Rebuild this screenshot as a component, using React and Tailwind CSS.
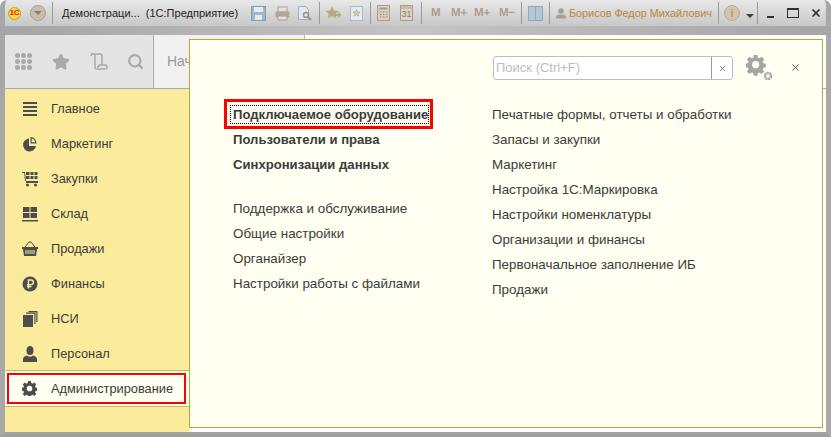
import { Star, Search, X } from "lucide-react";

const iconColor = "#4d4d4d";

// Left section icons, drawn on a 16x16 grid
function SectionIcon({ name }) {
  if (name === "main") {
    return (
      <svg width="16" height="16" viewBox="0 0 16 16" fill={iconColor}>
        <rect x="1" y="1" width="14" height="2" />
        <rect x="1" y="5" width="14" height="2" />
        <rect x="1" y="9" width="14" height="2" />
        <rect x="1" y="13" width="14" height="2" />
      </svg>
    );
  }
  if (name === "marketing") {
    return (
      <svg width="16" height="16" viewBox="0 0 16 16" fill={iconColor}>
        <path d="M7 2.500a6.500 6.500 0 1 0 7 7.500H7z" />
        <path d="M8.500 1a6 6 0 0 1 6 6.500h-6zM9.700 2.400v3.900h3.600a4.700 4.700 0 0 0-3.600-3.900z" fillRule="evenodd" />
      </svg>
    );
  }
  if (name === "purchase") {
    return (
      <svg width="16" height="16" viewBox="0 0 16 16" fill={iconColor}>
        <rect x="4" y="1" width="3.500" height="3" />
        <rect x="8.500" y="1" width="3" height="3" />
        <rect x="12.500" y="1" width="3" height="3" />
        <rect x="4" y="5" width="3.500" height="3" />
        <rect x="8.500" y="5" width="3" height="3" />
        <rect x="12.500" y="5" width="3" height="3" />
        <rect x="4" y="10" width="12" height="2" />
        <path d="M0 1h3l1 9H3L2.200 2H0z" />
        <circle cx="5.500" cy="14" r="1.500" />
        <circle cx="13.500" cy="14" r="1.500" />
      </svg>
    );
  }
  if (name === "stock") {
    return (
      <svg width="16" height="16" viewBox="0 0 16 16" fill={iconColor}>
        <rect x="1" y="1" width="6.500" height="5" />
        <rect x="8.500" y="1" width="6.500" height="5" />
        <rect x="1" y="7" width="6.500" height="5" />
        <rect x="8.500" y="7" width="6.500" height="5" />
        <rect x="0" y="14" width="16" height="1.500" />
      </svg>
    );
  }
  if (name === "sales") {
    return (
      <svg width="16" height="16" viewBox="0 0 16 16">
        <path d="M0 6h16v2h-1l-1 7H2L1 8H0z" fill={iconColor} />
        <path d="M3 6l4-5h2l4 5" fill="none" stroke={iconColor} />
        <path d="M4 9v4M6 9v4M8 9v4M10 9v4M12 9v4" stroke="#fbeb9c" />
      </svg>
    );
  }
  if (name === "finance") {
    return (
      <svg width="16" height="16" viewBox="0 0 16 16">
        <circle cx="8" cy="8" r="7.500" fill={iconColor} />
        <path d="M6.500 12.500V4h2.600a2.300 2.300 0 0 1 0 4.600H5M5 10.500h4.500" fill="none" stroke="#fbeb9c" strokeWidth="1.400" />
      </svg>
    );
  }
  if (name === "nsi") {
    return (
      <svg width="16" height="16" viewBox="0 0 16 16" fill={iconColor}>
        <rect x="1" y="4" width="10" height="12" />
        <path d="M4 1.500h9.500V13h-1.200V2.700H4z" />
        <path d="M6.500 0h9v11h-1.200V1.200H6.500z" />
      </svg>
    );
  }
  if (name === "staff") {
    return (
      <svg width="16" height="16" viewBox="0 0 16 16" fill={iconColor}>
        <ellipse cx="8" cy="4.500" rx="3.500" ry="4.500" />
        <path d="M1 16v-3c0-2 2-3 4-3.500 1.500 1.600 4.500 1.600 6 0 2 .5 4 1.500 4 3.500v3z" />
      </svg>
    );
  }
  return (
    <svg width="15" height="15" viewBox="0 0 16 16" fill={iconColor}>
      <path
        fillRule="evenodd"
        d="M6.500 0h3l.4 2.200 1.300.6 1.900-1.300 2.100 2.100-1.300 1.900.6 1.300 2 .4v3l-2 .4-.6 1.300 1.300 1.900-2.100 2.100-1.900-1.300-1.300.6-.4 2h-3l-.4-2-1.300-.6-1.900 1.300-2.100-2.100 1.300-1.900-.6-1.300-2-.4v-3l2-.4.6-1.300-1.300-1.900 2.100-2.100 1.900 1.300 1.300-.6zM8 5a3 3 0 1 0 0 6 3 3 0 0 0 0-6z"
      />
    </svg>
  );
}

const sections = [
  { id: "main", title: "Главное" },
  { id: "marketing", title: "Маркетинг" },
  { id: "purchase", title: "Закупки" },
  { id: "stock", title: "Склад" },
  { id: "sales", title: "Продажи" },
  { id: "finance", title: "Финансы" },
  { id: "nsi", title: "НСИ" },
  { id: "staff", title: "Персонал" },
];

const boldLinks = ["Пользователи и права", "Синхронизации данных"];
const serviceLinks = [
  "Поддержка и обслуживание",
  "Общие настройки",
  "Органайзер",
  "Настройки работы с файлами",
];
const rightLinks = [
  "Печатные формы, отчеты и обработки",
  "Запасы и закупки",
  "Маркетинг",
  "Настройка 1С:Маркировка",
  "Настройки номенклатуры",
  "Организации и финансы",
  "Первоначальное заполнение ИБ",
  "Продажи",
];

function Separator({ className }) {
  return <div className={`h-[22px] w-px shrink-0 bg-[#9a9a9a] ${className}`} />;
}

function MemoryKey({ label, className }) {
  return <span className={`shrink-0 text-[11.5px] font-bold text-[#a89e92] ${className}`}>{label}</span>;
}

function TitleBar() {
  return (
    <div className="flex h-[26px] shrink-0 items-center pl-2 text-[11px]">
      <div className="flex h-[13px] w-[13px] shrink-0 items-center justify-center rounded-full border border-[#c9a020] bg-[#fbd93c] text-[8px] leading-none font-bold text-[#d2201c]">
        1С
      </div>
      <div className="ml-[9px] flex h-[16px] w-[16px] shrink-0 items-center justify-center rounded-full border border-[#aaa08e] bg-[#c9bfae]">
        <div className="h-0 w-0 border-x-[4px] border-t-[4px] border-x-transparent border-t-[#8a8070]" />
      </div>
      <Separator className="ml-[6px]" />
      <span className="ml-[9px] w-[174px] shrink-0 whitespace-pre text-[#202020]">Демонстраци...  (1С:Предприятие)</span>

      <svg className="ml-[15px] shrink-0" width="15" height="15" viewBox="0 0 15 15">
        <rect x=".5" y=".5" width="14" height="14" fill="#9fb8cb" stroke="#7f9db3" />
        <rect x="3" y="1" width="9" height="5" fill="#e4ecf2" />
        <rect x="4" y="9" width="7" height="5" fill="#e4ecf2" />
      </svg>
      <svg className="ml-[9px] shrink-0" width="15" height="15" viewBox="0 0 15 15">
        <rect x="3" y="1" width="9" height="5" fill="#e6e0d8" stroke="#a89e92" />
        <rect x=".5" y="5.500" width="14" height="6" rx="1" fill="#b0a79c" />
        <rect x="3" y="10" width="9" height="4" fill="#e6e0d8" stroke="#a89e92" />
      </svg>
      <svg className="ml-[7px] shrink-0" width="15" height="15" viewBox="0 0 15 15">
        <path d="M1.500.5h7l3 3v10h-10z" fill="#e4e8ee" stroke="#9fb0c0" />
        <circle cx="9" cy="9" r="2.500" fill="none" stroke="#9a8f80" strokeWidth="1.400" />
        <path d="M11 11l3 3" stroke="#9a8f80" strokeWidth="2" />
      </svg>
      <Separator className="ml-[7px]" />
      <svg className="ml-[5px] shrink-0" width="17" height="16" viewBox="0 0 17 16">
        <path d="M7 1l2 4.500 4.500.5-3.200 3 1 4.500L7 11l-4.300 2.500 1-4.500L.5 6 5 5.500z" fill="#b5ab88" />
        <path d="M9 9h4V6.500l3.500 3.500-3.500 3.500V11H9z" fill="#9db88d" />
      </svg>
      <svg className="ml-[8px] shrink-0" width="13" height="15" viewBox="0 0 13 15">
        <rect x=".5" y=".5" width="12" height="14" fill="#e6ebf0" stroke="#a8bccb" />
        <path d="M6.500 3.500l1 2.400 2.500.2-1.900 1.600.6 2.500-2.200-1.300-2.200 1.300.6-2.500L3 6.100l2.500-.2z" fill="#d6cc9c" stroke="#a89e80" strokeWidth=".5" />
      </svg>
      <Separator className="ml-[7px]" />
      <svg className="ml-[6px] shrink-0" width="13" height="16" viewBox="0 0 13 16">
        <rect x=".5" y=".5" width="12" height="15" fill="#d8d2c2" stroke="#a89e8a" />
        <rect x="2.500" y="2.500" width="8" height="2" fill="#9aa38a" />
        <path d="M3 7h1.500M6 7h1.500M9 7h1.500M3 9.500h1.500M6 9.500h1.500M9 9.500h1.500M3 12h1.500M6 12h1.500M9 12h1.500" stroke="#8a8170" />
      </svg>
      <div className="ml-[10px] flex h-[16px] w-[13px] shrink-0 flex-col border border-[#a89e8a] bg-[#ddd6c6]">
        <div className="h-[4px] bg-[#c9bda5]" />
        <span className="text-center text-[9px] leading-[11px] text-[#8a8170]">31</span>
      </div>
      <Separator className="ml-[8px]" />
      <MemoryKey label="M" className="ml-[9px] w-[10px]" />
      <MemoryKey label="M+" className="ml-[10px] w-[16px]" />
      <MemoryKey label="M+" className="ml-[7px] w-[16px]" />
      <MemoryKey label="M−" className="ml-[9px] w-[16px]" />
      <Separator className="ml-[6px]" />
      <div className="ml-[6px] flex h-[15px] w-[15px] shrink-0 border border-[#8fa9bd] bg-[#b4c8d8]">
        <div className="w-1/2 border-r border-[#8fa9bd]" />
      </div>
      <Separator className="ml-[6px]" />
      <svg className="ml-[6px] shrink-0" width="10" height="11" viewBox="0 0 10 11" fill="#a8a091">
        <circle cx="5" cy="3" r="2.800" />
        <path d="M0 10.500V9c0-1.500 2-2.300 3-2.500h4c1 .2 3 1 3 2.500v1.500z" />
      </svg>
      <span className="ml-[3px] w-[145px] shrink-0 text-[10.8px] whitespace-nowrap text-[#b08a3a]">Борисов Федор Михайлович</span>
      <Separator className="ml-[4px]" />
      <div className="ml-[5px] flex h-[16px] w-[16px] shrink-0 items-center justify-center rounded-full border border-[#b5ab95] bg-[#cfc6ad] text-[11px] font-bold text-[#a3a06a]">
        i
      </div>
      <div className="mt-[6px] ml-[6px] h-0 w-0 shrink-0 border-x-[4px] border-t-[4px] border-x-transparent border-t-[#404040]" />
      <Separator className="ml-[3px]" />
      <div className="mt-[7px] ml-[9px] h-[2px] w-[7px] shrink-0 bg-[#303030]" />
      <div className="ml-[13px] h-[10px] w-[12px] shrink-0 border border-t-2 border-[#303030]" />
      <X className="ml-[11px] shrink-0 text-[#303030]" size={12} strokeWidth={3.500} />
    </div>
  );
}

function TopPanel() {
  return (
    <div className="flex h-[54px] shrink-0 border-b border-[#a8a8a8] bg-white">
      <div className="flex w-[149px] shrink-0 items-center border-r border-[#a8a8a8] bg-[#e4e4e4] pl-[10px]">
        <div className="grid w-[17px] shrink-0 grid-cols-3 gap-[1px]">
          {[0, 1, 2, 3, 4, 5, 6, 7, 8].map((dot) => (
            <div key={dot} className="h-[5px] w-[5px] rounded-full bg-[#a9a9a9]" />
          ))}
        </div>
        <Star className="ml-[20px] shrink-0 text-[#a9a9a9]" size={18} fill="#a9a9a9" />
        <svg className="ml-[20px] shrink-0" width="18" height="17" viewBox="0 0 18 17" fill="none" stroke="#a9a9a9" strokeWidth="1.500">
          <path d="M1 3a2 2 0 0 1 4 0v10.500a2 2 0 0 0 2 2.500h8a2 2 0 0 0 0-4H9a2 2 0 0 1-2 2M1 1h9a2 2 0 0 1 2 2v9" />
        </svg>
        <Search className="ml-[19px] shrink-0 text-[#a9a9a9]" size={17} strokeWidth={3} />
      </div>
      <div className="flex w-[151px] shrink-0 items-center border-r border-[#b8b8b8] bg-[#f1f1f1] pl-[13px] text-[14px] text-[#9a9a9a]">
        Начальная
      </div>
    </div>
  );
}

function Sidebar() {
  return (
    <aside className="flex h-full w-[184px] shrink-0 flex-col bg-[#fbeb9c] pt-[2px] text-[12.8px] text-[#3b3b3b]">
      {sections.map((section) => (
        <div key={section.id} className="flex h-[35px] shrink-0 items-center pl-[17px]">
          <SectionIcon name={section.id} />
          <span className="ml-[13px]">{section.title}</span>
        </div>
      ))}
      <div className="mt-[-1px] h-[37px] shrink-0 border-y border-[#c9b84a] bg-[#fffff2] py-[2px] pr-[3px] pl-[2px]">
        <div className="flex h-[31px] items-center border-2 border-[#ff0000] pl-[13px]">
          <SectionIcon name="admin" />
          <span className="ml-[14px]">Администрирование</span>
        </div>
      </div>
    </aside>
  );
}

function MenuLink({ children, className = "" }) {
  return <div className={`flex h-[25px] items-center whitespace-nowrap ${className}`}>{children}</div>;
}

function Popup() {
  return (
    <div className="absolute top-[39px] left-[189px] flex h-[389px] w-[634px] flex-col border border-[#b8a637] bg-[#fffff2] text-[13.4px] text-[#3b3b3b]">
      <div className="flex h-[59px] shrink-0 items-start justify-end pt-[16px]">
        <div className="flex h-[24px] w-[240px] shrink-0 rounded-[3px] border border-[#bdbdbd] bg-white text-[13px] text-[#bdbdbd]">
          <div className="flex flex-1 items-center border-r border-[#9a9a9a] pl-[2px]">Поиск (Ctrl+F)</div>
          <div className="flex w-[20px] items-center justify-center">
            <X size={9} className="text-[#606060]" strokeWidth={2} />
          </div>
        </div>
        <svg className="mt-[-1px] ml-[13px] shrink-0" width="27" height="26" viewBox="0 0 27 26" fill="#a6a6a6">
          <path
            fillRule="evenodd"
            transform="scale(1.200)"
            d="M6.500 0h3l.4 2.200 1.300.6 1.900-1.300 2.100 2.100-1.300 1.900.6 1.300 2 .4v3l-2 .4-.6 1.300 1.300 1.900-2.100 2.100-1.900-1.300-1.300.6-.4 2h-3l-.4-2-1.300-.6-1.900 1.300-2.100-2.100 1.300-1.900-.6-1.300-2-.4v-3l2-.4.6-1.300-1.300-1.900 2.100-2.100 1.900 1.300 1.300-.6zM8 5a3 3 0 1 0 0 6 3 3 0 0 0 0-6z"
          />
          <circle cx="22" cy="21" r="3" fill="none" stroke="#a6a6a6" strokeWidth="2.500" strokeDasharray="2 0.500" />
        </svg>
        <X size={11} className="mt-[6px] mr-[21px] ml-[17px] shrink-0 text-[#505050]" strokeWidth={2} />
      </div>
      <div className="flex">
        <div className="w-[302px] shrink-0">
          <div className="ml-[34px] h-[30px] w-[209px] border-[3px] border-[#ff0000] pt-[3px] pl-[3px] text-[13.1px] font-bold">
            <span className="inline-block h-[19px] w-[199px] border border-dotted border-black pl-[2px] leading-[17px] whitespace-nowrap">
              Подключаемое оборудование
            </span>
          </div>
          <div className="mt-[-2px] ml-[43px]">
            {boldLinks.map((link) => (
              <MenuLink key={link} className="text-[13.1px] font-bold">{link}</MenuLink>
            ))}
            <div className="mt-[20px]">
              {serviceLinks.map((link) => (
                <MenuLink key={link}>{link}</MenuLink>
              ))}
            </div>
          </div>
        </div>
        <div className="pt-[4px]">
          {rightLinks.map((link) => (
            <MenuLink key={link}>{link}</MenuLink>
          ))}
        </div>
      </div>
    </div>
  );
}

export default function App() {
  return (
    <div className="relative h-[437px] w-[831px] overflow-hidden font-[Liberation_Sans,Arial,sans-serif]">
      <div className="flex h-full w-full flex-col rounded-t-[7px] border-x-[5px] border-b-[5px] border-x-[#a8a8a8] border-b-[#a0a0a0] bg-gradient-to-b from-[#e8e8e8] via-[#c8c8c8] via-[6%] to-[#a8a8a8] to-[8%]">
        <div className="mx-[-5px]">
          <TitleBar />
          <div className="h-[9px] bg-gradient-to-r from-[#a5a5a8] via-[#c4c4c4] to-[#a5a5a8]" />
        </div>
        <TopPanel />
        <div className="flex min-h-0 flex-1 bg-white">
          <Sidebar />
        </div>
      </div>
      <Popup />
    </div>
  );
}
